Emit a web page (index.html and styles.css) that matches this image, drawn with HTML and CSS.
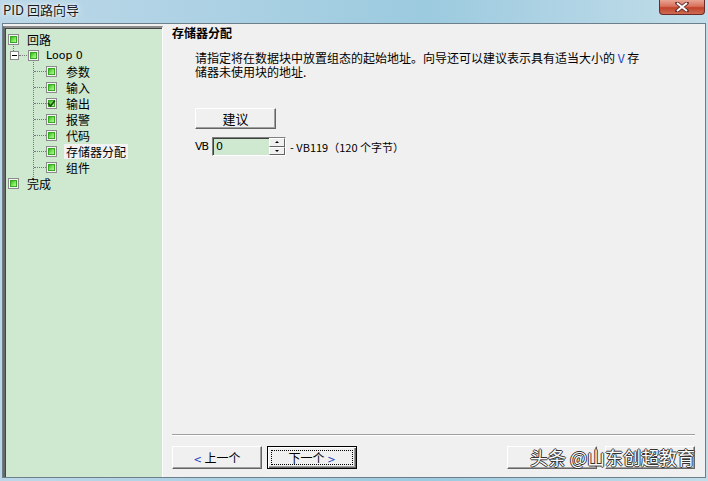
FILE: index.html
```html
<!DOCTYPE html>
<html lang="zh-CN">
<head>
    <meta charset="UTF-8">
    <title>PID 回路向导</title>
    <link rel="stylesheet" href="styles.css">
</head>
<body>
    <div class="window">
        <div class="titlebar">
            <span class="title">PID 回路向导</span>
            <div class="close">
                <svg width="14" height="10" viewBox="0 0 14 10">
                    <path d="M2 1 L12 9 M12 1 L2 9" stroke="#5a2a2a" stroke-width="3.6" stroke-linecap="round"/>
                    <path d="M2 1 L12 9 M12 1 L2 9" stroke="#fff" stroke-width="2"/>
                </svg>
            </div>
        </div>
        <div class="content">
            <div class="tree">
                <div class="row root">
                    <span class="box"></span><span class="label">回路</span>
                </div>
                <div class="row loop">
                    <span class="expander"></span><span class="dots"></span><span class="box"></span><span class="label">Loop 0</span>
                </div>
                <div class="children">
                    <div class="row child"><span class="dots"></span><span class="box"></span><span class="label">参数</span></div>
                    <div class="row child"><span class="dots"></span><span class="box"></span><span class="label">输入</span></div>
                    <div class="row child"><span class="dots"></span><span class="box checked">
                        <svg width="9" height="9" viewBox="0 0 9 9"><path d="M1 4 L3.5 7 L8 1.5" fill="none" stroke="#1d4a12" stroke-width="1.6"/></svg>
                    </span><span class="label">输出</span></div>
                    <div class="row child"><span class="dots"></span><span class="box"></span><span class="label">报警</span></div>
                    <div class="row child"><span class="dots"></span><span class="box"></span><span class="label">代码</span></div>
                    <div class="row child"><span class="dots"></span><span class="box"></span><span class="label selected">存储器分配</span></div>
                    <div class="row child last"><span class="dots"></span><span class="box"></span><span class="label">组件</span></div>
                </div>
                <div class="row root">
                    <span class="box"></span><span class="label">完成</span>
                </div>
            </div>

            <div class="main">
                <h2>存储器分配</h2>
                <div class="desc">
                    <span class="line">请指定将在数据块中放置组态的起始地址。向导还可以建议表示具有适当大小的 <span class="v">V</span> 存</span>
                    <span class="line">储器未使用块的地址.</span>
                </div>
                <button class="btn suggest">建议</button>
                <div class="vb-row">
                    <span class="vb">VB</span>
                    <div class="spin-input">
                        <span class="value">0</span>
                        <div class="spin">
                            <span class="up"></span>
                            <span class="down"></span>
                        </div>
                    </div>
                    <span class="range">- VB119（120 个字节）</span>
                </div>
                <div class="spacer"></div>
                <div class="sep"></div>
                <div class="nav">
                    <button class="btn nav-btn"><span class="arrow">&lt;</span> 上一个</button>
                    <button class="btn nav-btn default"><span class="focus">下一个 <span class="arrow">&gt;</span></span></button>
                    <div class="nav-right">
                        <!-- these two are covered by the watermark -->
                        <button class="btn nav-btn"></button>
                        <button class="btn nav-btn"></button>
                        <span class="watermark">头条 @山东创超教育</span>
                    </div>
                </div>
            </div>
        </div>
    </div>
</body>
</html>
```

FILE: styles.css
```css
body {
    margin: 0;
    width: 708px;
    height: 481px;
    overflow: hidden;
    font-family: "Noto Sans CJK SC", "Liberation Sans", sans-serif;
    font-size: 12px;
    color: #000;
}
.window {
    width: 708px;
    height: 481px;
    display: flex;
    flex-direction: column;
    background: linear-gradient(90deg, #bcd8e8 0%, #a7cfe2 40%, #9ccadf 60%, #c2dde9 100%);
    box-sizing: border-box;
    padding: 0 2px 3px 2px;
}
.titlebar {
    height: 23px;
    display: flex;
    align-items: flex-start;
    justify-content: space-between;
    flex-shrink: 0;
}
.title {
    font-size: 13px;
    line-height: 20px;
    margin-left: 1px;
    color: #1a1a1a;
    text-shadow: 0 0 6px rgba(255,255,255,0.9), 0 0 3px rgba(255,255,255,0.9);
}
.close {
    width: 46px;
    height: 15px;
    margin-right: 1px;
    box-sizing: border-box;
    border: 1px solid #6b2b2b;
    border-top: none;
    border-radius: 0 0 4px 4px;
    background: linear-gradient(#e9a493 0%, #d9705c 45%, #c1432b 55%, #cf6a52 100%);
    display: flex;
    align-items: center;
    justify-content: center;
}
.content {
    flex: 1;
    display: flex;
    background: #f0f0f0;
    border: 1px solid #6d7f8a;
    min-height: 0;
}

/* tree */
.tree {
    width: 160px;
    margin: 2px 0 0 0;
    box-sizing: border-box;
    background: #cfe8d0;
    border-top: 2px solid #8c8c8c;
    border-left: 2px solid #696969;
    border-right: 1px solid #fff;
    padding: 3px 0 0 3px;
    box-shadow: inset 1px 1px 0 #444;
}
.row {
    display: flex;
    align-items: center;
    height: 16px;
    position: relative;
}
.box {
    width: 11px;
    height: 11px;
    box-sizing: border-box;
    border: 1px solid #8a8a8a;
    background: #f6f6f6;
    padding: 1px;
    flex-shrink: 0;
    display: flex;
}
.box::after {
    content: "";
    flex: 1;
    background: linear-gradient(135deg, #2eb81a 0%, #7fe85b 55%, #b4f79c 100%);
    border: 1px solid #3aa626;
}
.box.checked {
    position: relative;
}
.box.checked svg {
    position: absolute;
    left: 0;
    top: 0;
}
.label {
    padding: 0 2px;
    margin-left: 7px;
    line-height: 15px;
    white-space: nowrap;
}
.label.selected {
    background: #f2f2f2;
}
.root .label {
    margin-left: 6px;
}
.loop .label {
    margin-left: 5px;
    font-family: "DejaVu Sans", sans-serif;
    font-size: 11px;
}
.root:first-child::after {
    content: "";
    position: absolute;
    left: 5px;
    top: 13px;
    height: 7px;
    border-left: 1px dotted #777;
}
.expander {
    width: 9px;
    height: 9px;
    box-sizing: border-box;
    border: 1px solid #8a8a8a;
    background: #fff;
    margin-left: 2px;
    position: relative;
}
.expander::after {
    content: "";
    position: absolute;
    left: 1px;
    right: 1px;
    top: 3px;
    border-top: 1px solid #000;
}
.dots {
    width: 9px;
    border-top: 1px dotted #777;
    flex-shrink: 0;
}
.loop .dots {
    width: 8px;
    margin-right: 1px;
}
.children {
    margin-left: 25px;
    position: relative;
}
.children::before {
    content: "";
    position: absolute;
    left: 0;
    top: -5px;
    height: 125px;
    border-left: 1px dotted #777;
}
.child .dots {
    width: 12px;
    margin-left: 1px;
}

/* main panel */
.main {
    flex: 1;
    display: flex;
    flex-direction: column;
    padding: 2px 10px 8px 9px;
}
h2 {
    margin: 0;
    font-size: 12px;
    font-weight: bold;
    line-height: 14px;
}
.desc {
    margin: 11px 0 0 23px;
}
.desc .line {
    display: block;
    height: 14px;
    line-height: 14px;
    white-space: nowrap;
}
.v {
    color: #1a3fd0;
}
.btn {
    font-family: "Noto Sans CJK SC", "Liberation Sans", sans-serif;
    font-size: 12px;
    background: #f0f0f0;
    border: 1px solid;
    border-color: #fff #646464 #646464 #fff;
    box-shadow: inset -1px -1px 0 #a0a0a0;
    padding: 0;
    color: #000;
}
.suggest {
    width: 81px;
    height: 21px;
    margin: 29px 0 0 23px;
    font-size: 13px;
}
.vb-row {
    display: flex;
    align-items: center;
    margin: 8px 0 0 23px;
    height: 19px;
}
.vb {
    font-family: "DejaVu Sans", sans-serif;
    font-size: 11px;
    letter-spacing: -1px;
    margin-right: 4px;
}
.spin-input {
    width: 74px;
    height: 19px;
    box-sizing: border-box;
    border: 1px solid;
    border-color: #808080 #fff #fff #808080;
    box-shadow: inset 1px 1px 0 #404040;
    background: #cfe8d0;
    display: flex;
    align-items: center;
    justify-content: space-between;
}
.value {
    padding-left: 3px;
    font-family: "DejaVu Sans", sans-serif;
    font-size: 11px;
}
.spin {
    width: 16px;
    height: 17px;
    display: flex;
    flex-direction: column;
}
.spin span {
    flex: 1;
    background: #f0f0f0;
    border: 1px solid;
    border-color: #fff #646464 #646464 #fff;
    position: relative;
}
.spin span::after {
    content: "";
    position: absolute;
    left: 5px;
    top: 2px;
    border-left: 2px solid transparent;
    border-right: 2px solid transparent;
}
.spin .up::after {
    border-bottom: 2px solid #000;
}
.spin .down::after {
    border-top: 2px solid #000;
}
.range {
    margin-left: 4px;
    font-size: 11px;
}
.spacer {
    flex: 1;
}
.sep {
    border-top: 1px solid #a0a0a0;
    border-bottom: 1px solid #fff;
}
.nav {
    display: flex;
    margin-top: 10px;
    gap: 5px;
}
.nav-btn {
    width: 90px;
    height: 23px;
}
.nav-btn.default {
    border: 1px solid #000;
    box-shadow: inset 1px 1px 0 #fff, inset -1px -1px 0 #646464, inset -2px -2px 0 #a0a0a0;
    padding: 3px;
}
.focus {
    display: block;
    height: 100%;
    box-sizing: border-box;
    border: 1px dotted #000;
    line-height: 14px;
}
.arrow {
    color: #2040c0;
    font-family: "DejaVu Sans", sans-serif;
    font-size: 10px;
}
.nav-right {
    margin-left: auto;
    display: flex;
    gap: 8px;
    position: relative;
}
.watermark {
    position: absolute;
    right: 0;
    top: -1px;
    font-size: 18px;
    line-height: 24px;
    color: #fafafa;
    white-space: nowrap;
    text-shadow: 1px 0 0 #333, -1px 0 0 #333, 0 1px 0 #333, 0 -1px 0 #333;
}
```
